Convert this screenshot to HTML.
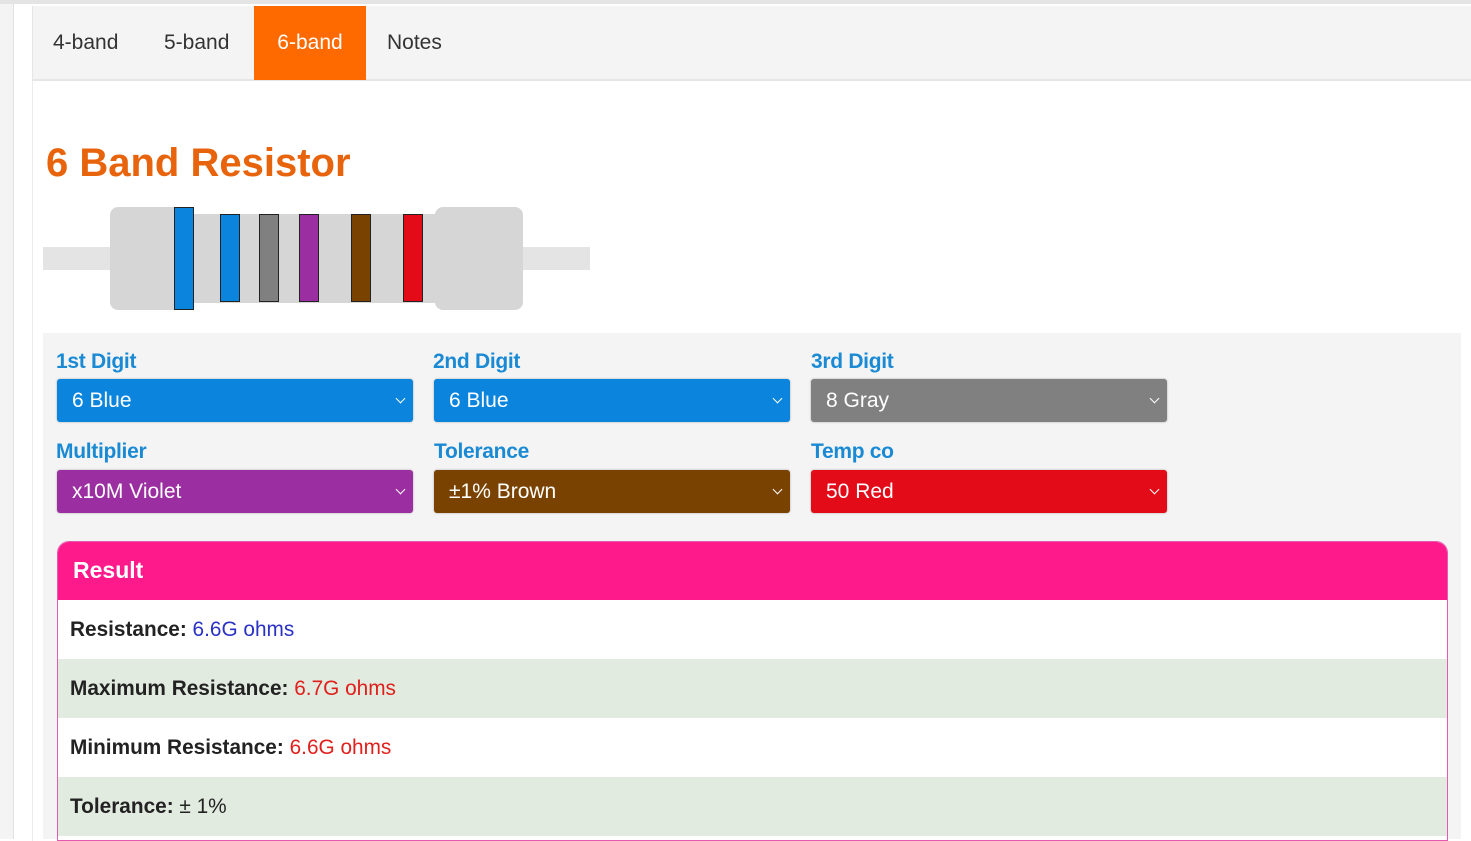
<!DOCTYPE html>
<html><head><meta charset="utf-8"><style>
*{box-sizing:border-box;margin:0;padding:0}
body{width:1471px;height:839px;overflow:hidden;background:#fff;font-family:"Liberation Sans",Arial,sans-serif;position:relative}
.a{position:absolute}
.tab{position:absolute;top:6px;height:74px;line-height:74px;font-size:21px;color:#333}
.lbl{position:absolute;font-size:21px;font-weight:bold;color:#1a8ad4;letter-spacing:-0.3px}
.sel{position:absolute;width:356px;height:43px;border-radius:3px;color:#fff;font-size:21px;line-height:43px;padding-left:15px;box-shadow:0 0 2px rgba(0,0,0,.3)}
.sel:after{content:"";position:absolute;right:9px;top:16px;width:6px;height:6px;border-right:1.5px solid #fff;border-bottom:1.5px solid #fff;transform:rotate(45deg)}
.band{position:absolute;border:1.5px solid #222;width:20px}
.row{position:absolute;left:58px;width:1389px;height:59px;font-size:20.8px;line-height:59px;padding-left:12px;color:#222}
.row b{color:#222}
</style></head><body>
<div class="a" style="left:0;top:0;width:14px;height:839px;background:#f4f4f4;border-right:1px solid #e2e2e2"></div>
<div class="a" style="left:0;top:0;width:1471px;height:4px;background:#e4e4e4"></div>
<div class="a" style="left:32px;top:6px;width:1439px;height:75px;background:#f4f4f4;border-bottom:2px solid #e6e6e6;border-left:1px solid #e6e6e6"></div>
<div class="a" style="left:32px;top:81px;width:1px;height:760px;background:#ececec"></div>
<div class="tab" style="left:53px">4-band</div>
<div class="tab" style="left:164px">5-band</div>
<div class="tab" style="left:254px;width:112px;background:#ff6a00;color:#fff;text-align:center">6-band</div>
<div class="tab" style="left:387px">Notes</div>
<div class="a" style="left:46px;top:141px;font-size:40px;font-weight:bold;color:#e8640c">6 Band Resistor</div>
<div class="a" style="left:43px;top:247px;width:547px;height:23px;background:#e4e4e4"></div>
<div class="a" style="left:110px;top:207px;width:72px;height:103px;background:#d6d6d6;border-radius:8px"></div>
<div class="a" style="left:170px;top:214px;width:275px;height:89px;background:#d6d6d6"></div>
<div class="a" style="left:435px;top:207px;width:88px;height:103px;background:#d6d6d6;border-radius:8px"></div>
<div class="band" style="left:174px;top:207px;height:103px;background:#0a84dc"></div>
<div class="band" style="left:220px;top:214px;height:88px;background:#0a84dc"></div>
<div class="band" style="left:259px;top:214px;height:88px;background:#808080"></div>
<div class="band" style="left:299px;top:214px;height:88px;background:#9b2ea0"></div>
<div class="band" style="left:351px;top:214px;height:88px;background:#7a4200"></div>
<div class="band" style="left:403px;top:214px;height:88px;background:#e30b17"></div>
<div class="a" style="left:43px;top:333px;width:1418px;height:506px;background:#f4f4f4"></div>
<div class="lbl" style="left:56px;top:350px">1st Digit</div>
<div class="lbl" style="left:433px;top:350px">2nd Digit</div>
<div class="lbl" style="left:811px;top:350px">3rd Digit</div>
<div class="lbl" style="left:56px;top:440px">Multiplier</div>
<div class="lbl" style="left:434px;top:440px">Tolerance</div>
<div class="lbl" style="left:811px;top:440px">Temp co</div>
<div class="sel" style="left:57px;top:379px;background:#0a84dc">6 Blue</div>
<div class="sel" style="left:434px;top:379px;background:#0a84dc">6 Blue</div>
<div class="sel" style="left:811px;top:379px;background:#808080">8 Gray</div>
<div class="sel" style="left:57px;top:470px;background:#9b2ea0">x10M Violet</div>
<div class="sel" style="left:434px;top:470px;background:#7a4200">±1% Brown</div>
<div class="sel" style="left:811px;top:470px;background:#e30b17">50 Red</div>
<div class="a" style="left:57px;top:541px;width:1391px;height:300px;border:1px solid #e35ab0;border-radius:12px 12px 0 0;background:#fff;overflow:hidden">
<div style="height:59px;background:#ff1a8c;color:#fff;font-size:23px;font-weight:bold;line-height:57px;padding-left:15px">Result</div>
</div>
<div class="row" style="top:600px;background:#fff"><b>Resistance:</b> <span style="color:#2a32c4">6.6G ohms</span></div>
<div class="row" style="top:659px;background:#e2ebe0"><b>Maximum Resistance:</b> <span style="color:#e0201c">6.7G ohms</span></div>
<div class="row" style="top:718px;background:#fff"><b>Minimum Resistance:</b> <span style="color:#e0201c">6.6G ohms</span></div>
<div class="row" style="top:777px;background:#e2ebe0"><b>Tolerance:</b> ± 1%</div>
</body></html>
